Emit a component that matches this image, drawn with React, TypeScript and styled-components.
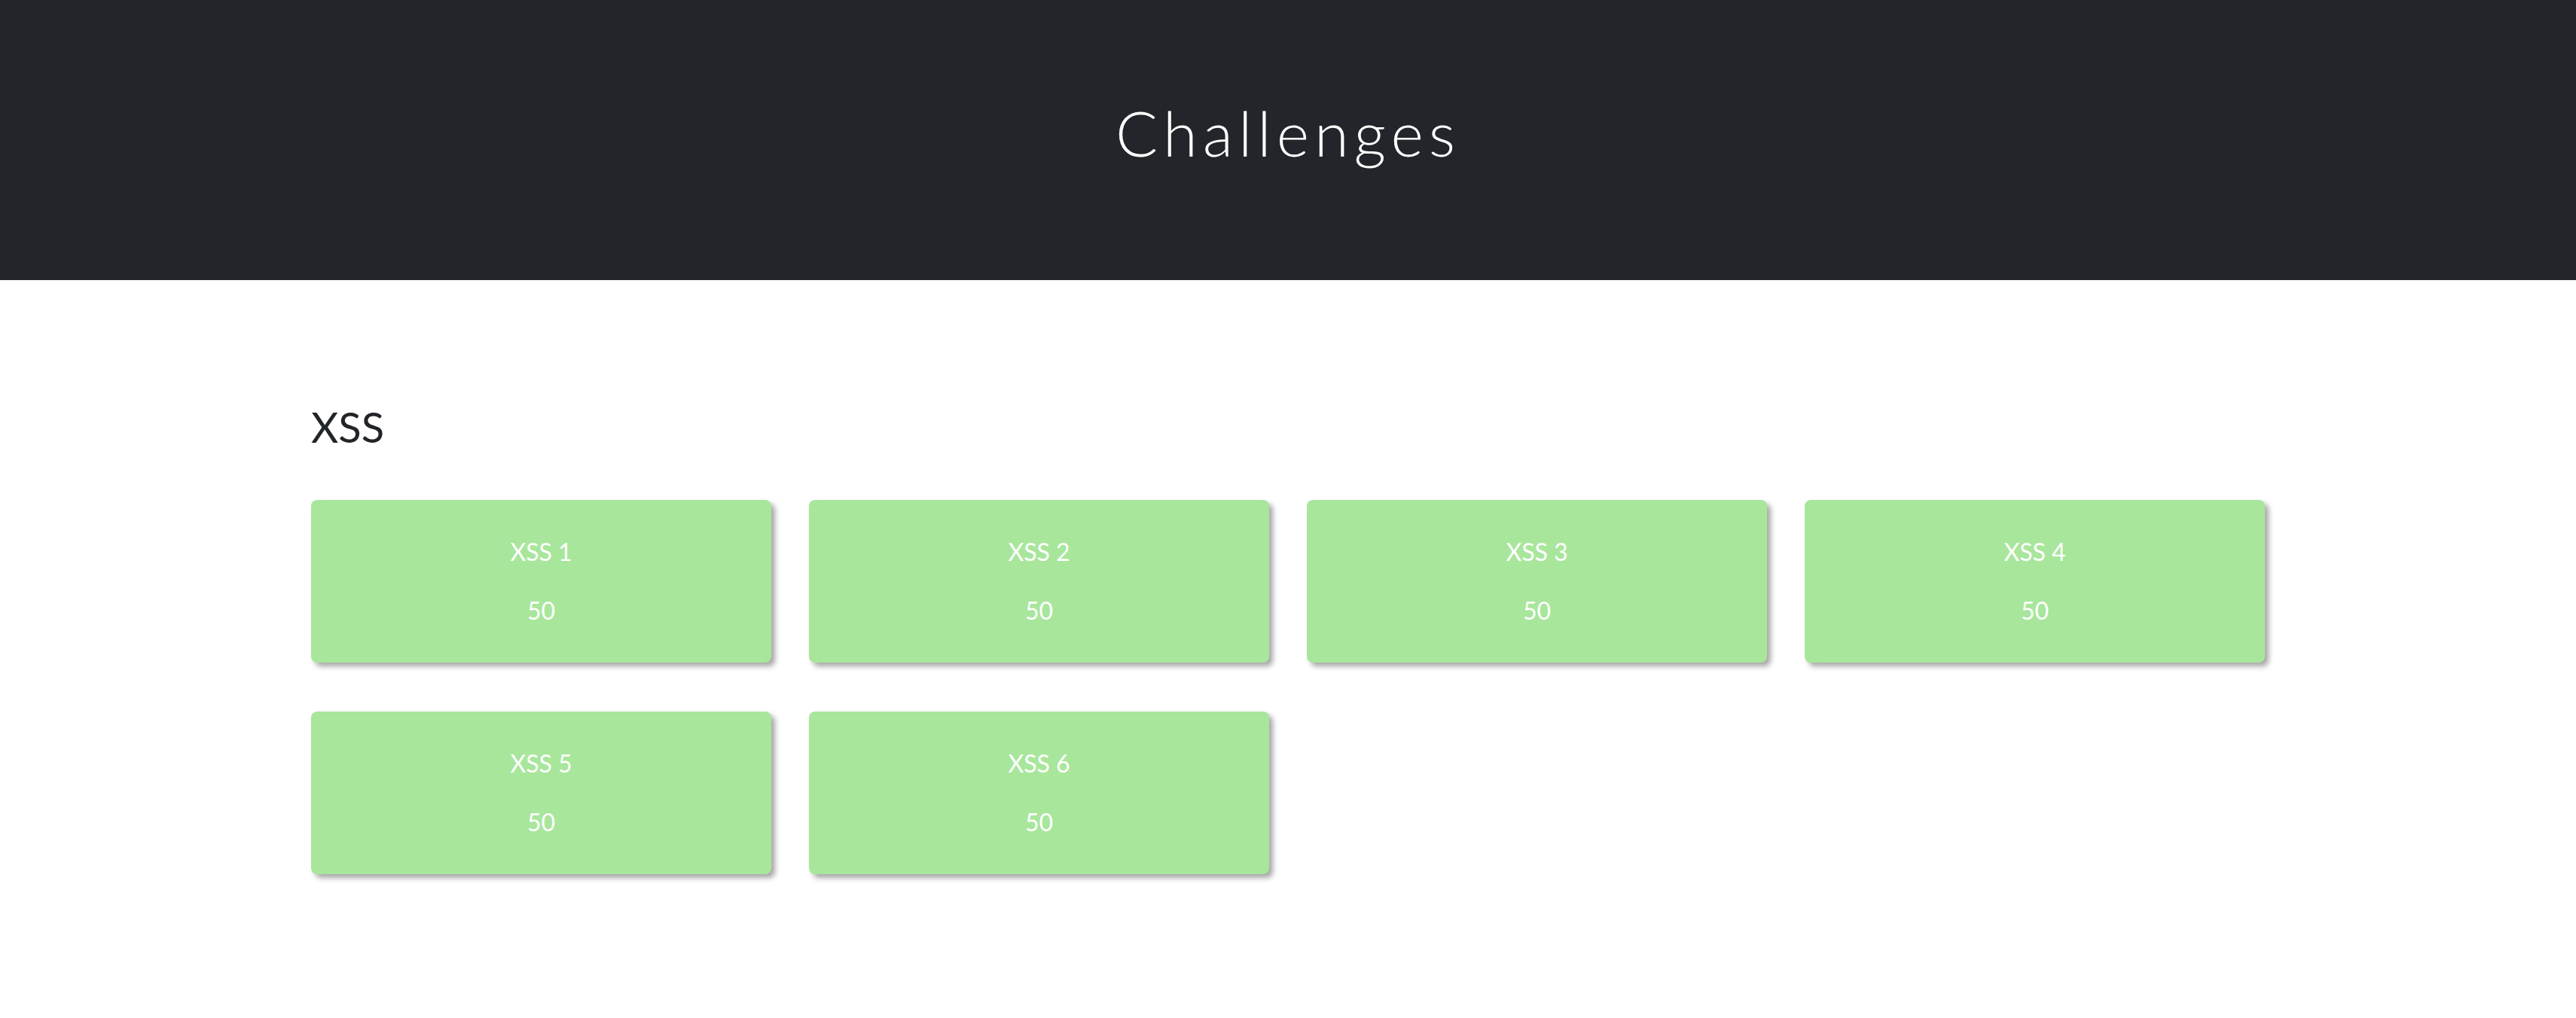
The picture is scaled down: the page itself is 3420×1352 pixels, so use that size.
import React from 'react';
import styled, { createGlobalStyle } from 'styled-components';

interface IChallenge {
  name: string;
  points: number;
}

const challenges: IChallenge[] = [
  { name: 'XSS 1', points: 50 },
  { name: 'XSS 2', points: 50 },
  { name: 'XSS 3', points: 50 },
  { name: 'XSS 4', points: 50 },
  { name: 'XSS 5', points: 50 },
  { name: 'XSS 6', points: 50 },
];

export default function App() {
  return (
    <>
      <GlobalStyle />
      <SHeader>
        <STitle>Challenges</STitle>
      </SHeader>
      <SMain>
        <SCategory>XSS</SCategory>
        <SGrid>
          {challenges.map((item) => (
            <SCard key={item.name}>
              <SCardText>{item.name}</SCardText>
              <SCardText>{item.points}</SCardText>
            </SCard>
          ))}
        </SGrid>
      </SMain>
    </>
  );
}

const GlobalStyle = createGlobalStyle`
  body {
    margin: 0;
    background: #fff;
    font-family: Lato, 'Liberation Sans', sans-serif;
  }
`;
const SHeader = styled.header`
  box-sizing: border-box;
  height: 372px;
  padding-top: 127px;
  background-color: #222529;
  text-align: center;
`;
const STitle = styled.h1`
  margin: 0;
  color: #fff;
  font-family: Lato, sans-serif;
  font-weight: 300;
  font-size: 83px;
  line-height: 1.2;
  letter-spacing: 7px;
`;
const SMain = styled.main`
  width: 2594px;
  margin: 0 auto;
  padding: 161px 0 120px;
`;
const SCategory = styled.h2`
  margin: 0 0 64px;
  color: #212529;
  font-size: 56px;
  font-weight: 400;
  line-height: 1.2;
`;
const SGrid = styled.div`
  display: grid;
  grid-template-columns: repeat(4, 1fr);
  column-gap: 50px;
  row-gap: 65px;
`;
const SCard = styled.div`
  height: 216px;
  display: flex;
  flex-direction: column;
  justify-content: center;
  align-items: center;
  gap: 30px;
  background-color: #a8e69c;
  border-radius: 8px;
  box-shadow: 5px 5px 7px rgba(0, 0, 0, 0.35);
`;
const SCardText = styled.p`
  margin: 0;
  color: #fff;
  font-size: 32px;
  line-height: 48px;
`;
